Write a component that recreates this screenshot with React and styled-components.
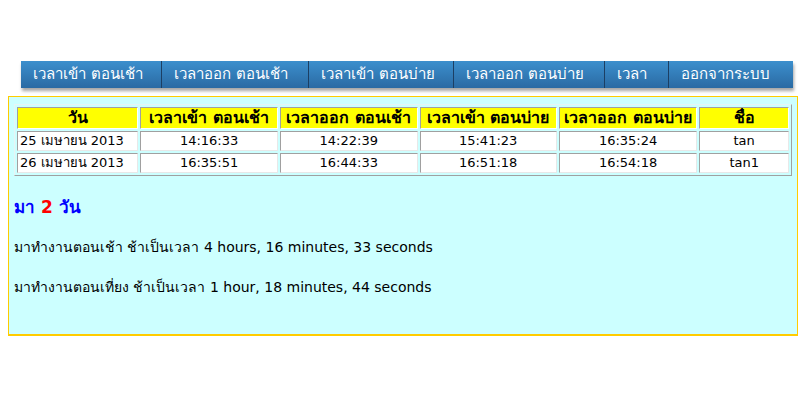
import styled, { createGlobalStyle } from 'styled-components';

const Global = createGlobalStyle`
  html, body { margin: 0; padding: 0; background: #fff; }
  body { font-family: Tahoma, "DejaVu Sans", "Noto Sans", sans-serif; }
`;

const Page = styled.div`
  padding: 61px 0 0 8px;
`;

const Menu = styled.ul`
  list-style: none;
  margin: 0 0 8px 13px;
  padding: 0;
  display: flex;
  width: 772px;
  height: 27px;
  box-shadow: 1px 3px 3px rgba(0, 0, 0, 0.35);
`;

const MenuItem = styled.li`
  width: ${p => p.w}px;
  flex: none;
  background: linear-gradient(#3c8fcd, #2a6aa3);
  border-right: 1px solid #1c3f63;
  color: #fff;
  font-size: 15px;
  line-height: 27px;
  padding-left: 12px;
  box-sizing: border-box;
  white-space: nowrap;
  &:last-child { border-right: none; }
`;

const Panel = styled.div`
  width: 790px;
  height: 240px;
  border: 1px solid #ffcc00;
  border-bottom-width: 2px;
  background: #ccffff;
  padding: 7px 5px 0 5px;
  box-sizing: border-box;
`;

const Table = styled.table`
  border-collapse: separate;
  border-spacing: 2px;
  border: 1px solid;
  border-color: #e8f4f4 #a0a0a0 #a0a0a0 #e8f4f4;
  width: 778px;
  background: #ccffff;
`;

const Th = styled.th`
  background: #ffff00;
  color: #000;
  font-size: 16px;
  font-weight: bold;
  height: 20px;
  line-height: 20px;
  padding: 0 2px;
  border: 1px solid;
  border-color: #a0a0a0 #ffffff #ffffff #a0a0a0;
  width: ${p => p.w}px;
  white-space: nowrap;
  overflow: hidden;
`;

const Td = styled.td`
  background: #fff;
  font-size: 13px;
  height: 18px;
  line-height: 18px;
  padding: 0 2px;
  text-align: ${p => (p.left ? 'left' : 'center')};
  border: 1px solid;
  border-color: #a0a0a0 #e8e8e8 #e8e8e8 #a0a0a0;
  white-space: nowrap;
`;

const Count = styled.div`
  color: #0000ff;
  font-size: 17px;
  font-weight: bold;
  line-height: 22px;
  margin-top: 20px;
`;

const Red = styled.span`
  color: #ff0000;
`;

const Line = styled.p`
  margin: ${p => p.top}px 0 0 0;
  font-size: 14px;
  line-height: 18px;
  color: #000;
`;

const menu = [
  ['เวลาเข้า ตอนเช้า', 141],
  ['เวลาออก ตอนเช้า', 147],
  ['เวลาเข้า ตอนบ่าย', 145],
  ['เวลาออก ตอนบ่าย', 151],
  ['เวลา', 64],
  ['ออกจากระบบ', 124],
];

const heads = [
  ['วัน', 116],
  ['เวลาเข้า ตอนเช้า', 133],
  ['เวลาออก ตอนเช้า', 132],
  ['เวลาเข้า ตอนบ่าย', 132],
  ['เวลาออก ตอนบ่าย', 133],
  ['ชื่อ', 88],
];

const rows = [
  ['25 เมษายน 2013', '14:16:33', '14:22:39', '15:41:23', '16:35:24', 'tan'],
  ['26 เมษายน 2013', '16:35:51', '16:44:33', '16:51:18', '16:54:18', 'tan1'],
];

export default function App() {
  return (
    <Page>
      <Global />
      <Menu>
        {menu.map(([t, w]) => (
          <MenuItem key={t} w={w}>{t}</MenuItem>
        ))}
      </Menu>
      <Panel>
        <Table>
          <thead>
            <tr>
              {heads.map(([t, w]) => (
                <Th key={t} w={w}>{t}</Th>
              ))}
            </tr>
          </thead>
          <tbody>
            {rows.map(r => (
              <tr key={r[0]}>
                {r.map((c, i) => (
                  <Td key={i} left={i === 0}>{c}</Td>
                ))}
              </tr>
            ))}
          </tbody>
        </Table>
        <Count>มา <Red>2</Red> วัน</Count>
        <Line top={20}>มาทำงานตอนเช้า ช้าเป็นเวลา 4 hours, 16 minutes, 33 seconds</Line>
        <Line top={22}>มาทำงานตอนเที่ยง ช้าเป็นเวลา 1 hour, 18 minutes, 44 seconds</Line>
      </Panel>
    </Page>
  );
}
